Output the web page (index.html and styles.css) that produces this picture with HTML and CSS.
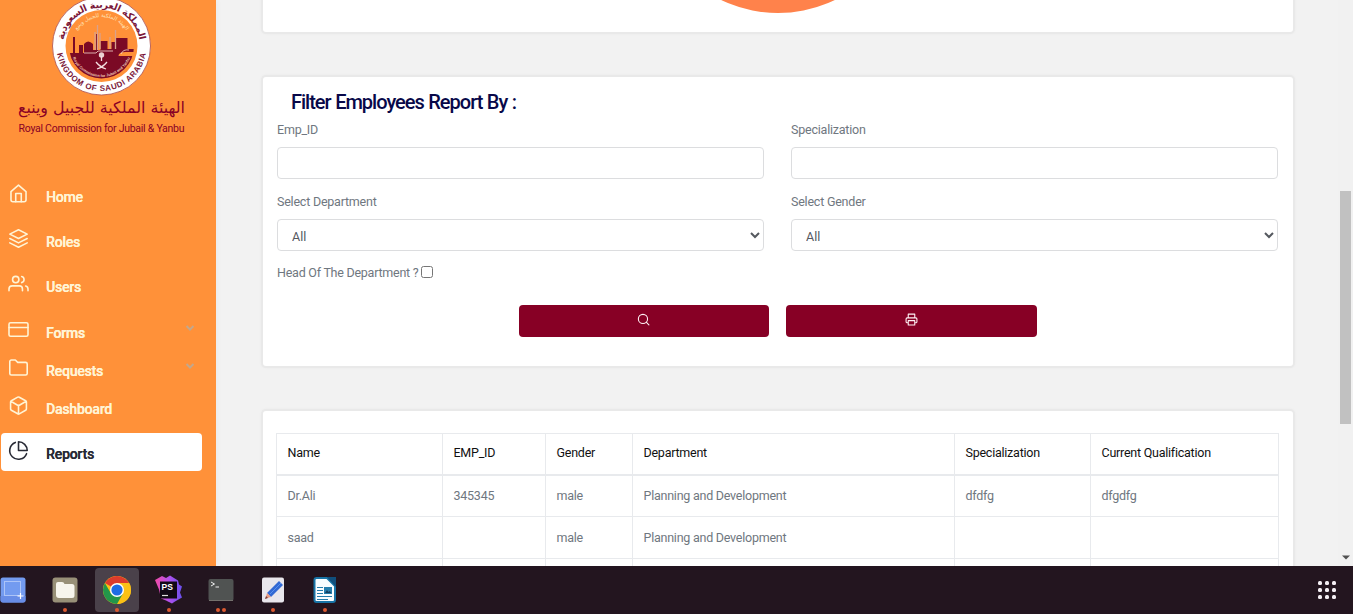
FILE: index.html
```html
<!DOCTYPE html>
<html lang="en">
<head>
<meta charset="utf-8">
<title>Reports</title>
<link rel="stylesheet" href="styles.css">
</head>
<body>
<div class="browser">
  <aside class="sidebar">
    <svg class="brand" width="216" height="140" viewBox="0 0 216 140">
      <defs>
        <path id="arcTop" d="M64 55 A38.500 38.500 0 1 1 139 55"/>
        <path id="arcBottom" d="M56.500 46 A45 45 0 0 0 146.500 46"/>
        <path id="innerTop" d="M72.500 46 A29 29 0 0 1 130.500 46"/>
        <path id="innerBottom" d="M70.500 46 A31 31 0 0 0 132.500 46"/>
        <clipPath id="disc"><circle cx="101.500" cy="46" r="32.500"/></clipPath>
      </defs>
      <circle cx="101.500" cy="46" r="49" fill="#fff" stroke="#a94c4b" stroke-width=".8"/>
      <circle cx="101.500" cy="46" r="36" fill="#ff9139"/>
      <g clip-path="url(#disc)" fill="#7b0a25">
        <path d="M66 53H73V37h2v16h4v-8h4v8h1v-9q4-5 9 0v6h3V34h1.500v16h3V41h7v8h4V42h4v-4h12v11h10v3h-12q-7 0-7 4h20v30H66z"/>
      </g>
      <path d="M95 32v18M97.500 25v25M100 33v16M110 37v12M115.500 30v19" stroke="#d9a18c" stroke-width="1.300"/>
      <path d="M84 53h12l2-2h15M121 54q2-5 8-4" stroke="#f5d8cf" stroke-width=".8" fill="none"/>
      <circle cx="101.500" cy="55" r="2.700" fill="#ead0d0"/>
      <path d="M101.500 61v-5M96 62q4 5 10 7M107 62q-4 5-10 7" stroke="#f3dfe0" stroke-width="1.300" fill="none"/>
      <text class="seal-ar"><textPath href="#arcTop" startOffset="50%" text-anchor="middle" textLength="108">المملكة العربية السعودية</textPath></text>
      <text class="seal-en"><textPath href="#arcBottom" startOffset="50%" text-anchor="middle" textLength="126">KINGDOM OF SAUDI ARABIA</textPath></text>
      <text class="seal-inner"><textPath href="#innerTop" startOffset="50%" text-anchor="middle">الهيئة الملكية للجبيل وينبع</textPath></text>
      <text class="seal-inner-en"><textPath href="#innerBottom" startOffset="50%" text-anchor="middle">Royal Commission for Jubail and Yanbu</textPath></text>
      <text class="brand-ar" x="101.500" y="113" text-anchor="middle" textLength="167" lengthAdjust="spacingAndGlyphs">الهيئة الملكية للجبيل وينبع</text>
      <text class="brand-en" x="18.500" y="132" textLength="166">Royal Commission for Jubail &amp; Yanbu</text>
    </svg>
    <nav class="nav">
      <a class="item gap"><svg class="ico" viewBox="0 0 24 24"><path d="M2.500 9.500 12 1.500l9.500 8V20a2.500 2.500 0 0 1-2.500 2.500H5A2.500 2.500 0 0 1 2.500 20z"/><path d="M8.500 22.500V12h7v10.500"/></svg><span>Home</span></a>
      <a class="item gap"><svg class="ico" viewBox="0 0 24 24"><path d="m12 1 11 5.500L12 12 1 6.500zM1 17.500 12 23l11-5.500M1 12l11 5.500L23 12"/></svg><span>Roles</span></a>
      <a class="item gap wide"><svg class="ico" viewBox="0 0 24 24"><path d="M17 21v-2a4 4 0 0 0-4-4H4a4 4 0 0 0-4 4v2M24 21v-2a4 4 0 0 0-3-3.870M16 3.130a4 4 0 0 1 0 7.750"/><circle cx="8.500" cy="7" r="4"/></svg><span>Users</span></a>
      <a class="item"><svg class="ico" viewBox="0 0 24 24"><rect x="0" y="3.500" width="24" height="17" rx="2"/><path d="M0 9.500h24"/></svg><span>Forms</span><svg class="caret" viewBox="0 0 10 6"><path d="m1.500 1 3.500 3.500L8.500 1"/></svg></a>
      <a class="item"><svg class="ico" viewBox="0 0 24 24"><path d="M23 19.500a2 2 0 0 1-2 2H3a2 2 0 0 1-2-2v-15a2 2 0 0 1 2-2h5l3 3h10a2 2 0 0 1 2 2z"/></svg><span>Requests</span><svg class="caret" viewBox="0 0 10 6"><path d="m1.500 1 3.500 3.500L8.500 1"/></svg></a>
      <a class="item gap"><svg class="ico" viewBox="0 0 24 24"><path d="M22 16.500v-9a2 2 0 0 0-1-1.500l-8-4.500a2 2 0 0 0-2 0L3 6a2 2 0 0 0-1 1.500v9A2 2 0 0 0 3 18l8 4.500a2 2 0 0 0 2 0l8-4.500a2 2 0 0 0 1-1.500zM2.300 6.700 12 12.300l9.700-5.600M12 23V12"/></svg><span>Dashboard</span></a>
      <a class="item active"><svg class="ico" viewBox="0 0 24 24"><path d="M22.200 16A11 11 0 1 1 8 1.800M23 12A11 11 0 0 0 12 1v11z"/></svg><span>Reports</span></a>
    </nav>
  </aside>
  <main class="main">
    <section class="card chart"><svg width="300" height="18" viewBox="0 0 300 18"><circle cx="150" cy="-118" r="131" fill="#ff824b"/></svg></section>
    <section class="card filter">
      <h2>Filter Employees Report By :</h2>
      <div class="fields">
        <label class="field"><span>Emp_ID</span><input type="text"></label>
        <label class="field"><span>Specialization</span><input type="text"></label>
        <label class="field"><span>Select Department</span><select><option>All</option></select></label>
        <label class="field"><span>Select Gender</span><select><option>All</option></select></label>
      </div>
      <label class="check"><span>Head Of The Department ?</span><input type="checkbox"></label>
      <div class="actions">
        <button aria-label="Search"><svg viewBox="0 0 24 24"><circle cx="11" cy="11" r="8.500"/><path d="m17 17 5 5"/></svg></button>
        <button aria-label="Print"><svg viewBox="0 0 24 24"><path d="M6 9V2h12v7M6 18H4a2 2 0 0 1-2-2v-5a2 2 0 0 1 2-2h16a2 2 0 0 1 2 2v5a2 2 0 0 1-2 2h-2M6 14h12v8H6z"/></svg></button>
      </div>
    </section>
    <section class="card results">
      <table>
        <colgroup><col class="c1"><col class="c2"><col class="c3"><col class="c4"><col class="c5"><col class="c6"></colgroup>
        <thead><tr><th>Name</th><th>EMP_ID</th><th>Gender</th><th>Department</th><th>Specialization</th><th>Current Qualification</th></tr></thead>
        <tbody>
          <tr><td>Dr.Ali</td><td>345345</td><td>male</td><td>Planning and Development</td><td>dfdfg</td><td>dfgdfg</td></tr>
          <tr><td>saad</td><td></td><td>male</td><td>Planning and Development</td><td></td><td></td></tr>
          <tr><td></td><td></td><td></td><td></td><td></td><td></td></tr>
        </tbody>
      </table>
    </section>
  </main>
  <div class="scrollbar"><div class="thumb"></div><svg class="down" width="8" height="5" viewBox="0 0 8 5"><path d="M0 .5h8L4 4.500z" fill="#505050"/></svg></div>
</div>
<footer class="dock">
  <div class="apps">
    <div class="app"><svg width="44" height="44" viewBox="0 0 44 44"><rect x="9.500" y="9.500" width="25" height="25" rx="2.500" fill="#739bf0"/><path d="M9.500 28h25v4a2.500 2.500 0 0 1-2.500 2.500H12A2.500 2.500 0 0 1 9.500 32z" fill="#688de7"/><rect x="13.500" y="13.500" width="16" height="14" fill="none" stroke="#e6edff" stroke-dasharray="1 1"/><path d="M29.500 25v6M26.500 28h6" stroke="#fff" stroke-width="1.200"/></svg></div>
    <div class="app"><svg width="44" height="44" viewBox="0 0 44 44"><rect x="9.500" y="9.500" width="25" height="25" rx="3" fill="#989078"/><path d="M13 16q0-2 2-2h4q2 0 2.500 2H29q2.500 0 2.500 2.500v9q0 2.500-2.500 2.500H16q-3 0-3-3z" fill="#f7f5ed"/></svg><i class="dots"><b></b></i></div>
    <div class="app current"><svg width="44" height="44" viewBox="0 0 44 44"><circle cx="22" cy="22" r="14" fill="#fbc116"/><path d="M22 22 9.880 15A14 14 0 0 1 34.120 15z" fill="#dc3b2c"/><path d="M22 15h12.120A14 14 0 0 1 22 36l6-10.500z" fill="#fbc116"/><path d="m28 25.500-6 10.500A14 14 0 0 1 9.880 15L16 25.500z" fill="#23964a"/><circle cx="22" cy="22" r="7" fill="#fff"/><circle cx="22" cy="22" r="5.600" fill="#1d6ce5"/></svg><i class="dots"><b></b></i></div>
    <div class="app"><svg width="44" height="44" viewBox="0 0 44 44"><defs><linearGradient id="ps" x1="0" x2="1"><stop stop-color="#f34ba4"/><stop offset=".5" stop-color="#b451ec"/><stop offset="1" stop-color="#6950ee"/></linearGradient></defs><path d="M8 12l7-4 4 2 4-2.500 8 5 1 4 3 2-2 6 2 5-7 4-3 2-6-3-5-2-2-9z" fill="url(#ps)"/><rect x="13" y="13.500" width="17" height="17" fill="#100916"/><text class="ps" x="14.500" y="22">PS</text><path d="M15 27.500h6" stroke="#ddd" stroke-width="1.200"/></svg><i class="dots"><b></b></i></div>
    <div class="app"><svg width="44" height="44" viewBox="0 0 44 44"><rect x="9.500" y="11" width="25" height="22" rx="2" fill="#505352"/><path d="M10 32.500h24" stroke="#74716d"/><path d="m12 14 3.500 2-3.500 2M16.500 19H20" stroke="#eee" fill="none"/></svg><i class="dots"><b></b><b></b></i></div>
    <div class="app"><svg width="44" height="44" viewBox="0 0 44 44"><rect x="11" y="9.500" width="22" height="25" rx="2" fill="#e9e7ec"/><path d="m16 25 12-12 4 4-12 12z" fill="#3269d3"/><path d="m19 26 11-11" stroke="#5790ef"/><path d="m16 25-1.500 5.500L20 29z" fill="#e99a80"/><path d="m15 28-1 3 3-1z" fill="#773b37"/></svg><i class="dots"><b></b></i></div>
    <div class="app"><svg width="44" height="44" viewBox="0 0 44 44"><path d="M13 10h11l8 8v14q0 2-2 2H13.500q-2 0-2-2V12q0-2 2-2z" fill="#f8fdff" stroke="#1874a5" stroke-width="2"/><path d="M24 9h9v10z" fill="#104f7c"/><path d="M14 19.500h6M14 22.500h6M14 25.500h6M14 28.500h15M14 31.500h11" stroke="#247dac" stroke-width="1.200"/><rect x="21" y="19" width="8" height="7" fill="#257ead"/><path d="m22 25 2-3 1.500 2 1-1 2 2z" fill="#123f61"/></svg><i class="dots"><b></b></i></div>
  </div>
  <div class="grid"><i></i><i></i><i></i><i></i><i></i><i></i><i></i><i></i><i></i></div>
</footer>
</body>
</html>
```

FILE: styles.css
```css
* { box-sizing: border-box; }
body { margin: 0; width: 1353px; height: 614px; overflow: hidden; font-family: Roboto, "Open Sans", sans-serif; font-size: 13px; color: #6f7780; }
.browser { height: 566px; display: grid; grid-template-columns: 216px 1fr 15px; overflow: hidden; background: #f2f2f2; }
.sidebar { background: #ff9139; height: 566px; box-shadow: 0 0 7px rgba(0,0,0,.05); }
.brand { display: block; fill: #890025; }
.seal-ar { font: bold 9.5px "DejaVu Sans", sans-serif; fill: #7b1739; }
.seal-en { font: bold 8px "Liberation Sans", sans-serif; fill: #7b1739; }
.seal-inner { font: 5.5px "DejaVu Sans", sans-serif; fill: #ffe1b5; }
.seal-inner-en { font: bold 3.8px "Liberation Sans", sans-serif; fill: #f1cdbd; }
.brand-ar { font: 16px "DejaVu Sans", sans-serif; }
.brand-en { font: 10.5px Roboto, sans-serif; }
.nav { padding: 36px 14px 0 1px; display: flex; flex-direction: column; }
.item { height: 38px; display: flex; align-items: flex-start; padding: 8px 7px 0 8px; color: #fff4d5; border-radius: 4px; }
.item span { font-size: 14px; font-weight: 500; line-height: 20px; padding: 3px 0 0 18px; letter-spacing: -.2px; text-shadow: .3px 0 currentColor; }
.gap { margin-bottom: 7px; }
.wide { margin-bottom: 8px; }
.ico { width: 19px; height: 19px; flex: none; fill: none; stroke: currentColor; stroke-width: 2; stroke-linejoin: round; stroke-linecap: round; overflow: visible; }
.caret { width: 10px; height: 6px; margin: 5px 0 0 auto; fill: none; stroke: #c3a78c; stroke-width: 2; }
.active { background: #fff; color: #282a35; }
.main { padding: 0 45px 0 47px; display: flex; flex-direction: column; gap: 45px; height: 566px; overflow: hidden; }
.card { background: #fff; border-radius: 3px; box-shadow: 0 0 0 2px #e9e9e9, 0 0 2px 2px #e9e9e9; flex: none; }
.chart { height: 32px; display: flex; justify-content: center; border-radius: 0 0 3px 3px; }
.filter { height: 289px; padding: 13px 15px 0 14px; }
h2 { margin: 0 0 0 14px; height: 24px; line-height: 24px; font-size: 20px; font-weight: 500; color: #080849; letter-spacing: -1px; word-spacing: .5px; white-space: nowrap; }
.fields { display: grid; grid-template-columns: 1fr 1fr; column-gap: 27px; row-gap: 13px; padding-top: 6px; }
.field { display: flex; flex-direction: column; font-size: 12.5px; letter-spacing: -.22px; }
.field span { height: 20px; line-height: 20px; margin-bottom: 7px; }
.field input, .field select { width: 100%; height: 32px; border: 1px solid #dcdddf; border-radius: 4px; background: #fff; padding: 0 10px; font: 12.5px Roboto, sans-serif; color: #55595f; outline: 0; margin: 0; }
.field select { padding: 2px 0 0 10px; }
.check { display: flex; align-items: flex-start; height: 20px; line-height: 20px; margin-top: 12px; font-size: 12.5px; letter-spacing: -.24px; }
.check input { width: 12px; height: 12px; margin: 3px 0 0 3px; }
.actions { display: flex; justify-content: center; gap: 17px; margin-top: 22px; }
button { width: 250.5px; height: 32px; border: 0; border-radius: 4px; background: #870025; padding: 0 0 3px; display: flex; align-items: center; justify-content: center; }
button svg { width: 13px; height: 13px; fill: none; stroke: #fff0f4; stroke-width: 2; stroke-linejoin: round; stroke-linecap: round; }
.results { height: 200px; padding: 22px 14px 0 13px; }
table { width: 1003px; table-layout: fixed; border-collapse: collapse; border: 1px solid #e8eaed; }
th, td { text-align: left; padding: 0 10.5px; border: 1px solid #e8eaed; white-space: nowrap; font-size: 12.5px; letter-spacing: -.24px; }
th { height: 41px; padding-bottom: 2px; font-weight: 400; color: #111; border-bottom: 2px solid #e8eaed; }
td { height: 42px; padding-bottom: 1px; }
.c1 { width: 166px; } .c2 { width: 103px; } .c3 { width: 87px; } .c4 { width: 322px; } .c5 { width: 136px; }
.scrollbar { height: 566px; background: #f1f1f1; padding: 191px 2px 0; display: flex; flex-direction: column; }
.thumb { height: 233px; background: #c1c1c1; }
.down { margin: 131px auto 0 2px; }
.dock { height: 48px; background: #23151f; display: flex; justify-content: space-between; align-items: center; padding-right: 17px; }
.apps { display: flex; gap: 8px; margin-left: -9px; }
.app { width: 44px; height: 44px; position: relative; border-radius: 4px; }
.app svg { display: block; }
.current { background: #4a414a; }
.dots { position: absolute; bottom: 0; left: 0; right: 0; display: flex; justify-content: center; gap: 2px; }
.dots b { width: 4px; height: 4px; border-radius: 50%; background: #dc5930; }
.ps { font: bold 8.5px "Liberation Sans", sans-serif; fill: #fff; }
.grid { display: grid; grid-template-columns: repeat(3, 4px); gap: 3px; }
.grid i { width: 4px; height: 4px; border-radius: 1.5px; background: #f4eff4; }
```
